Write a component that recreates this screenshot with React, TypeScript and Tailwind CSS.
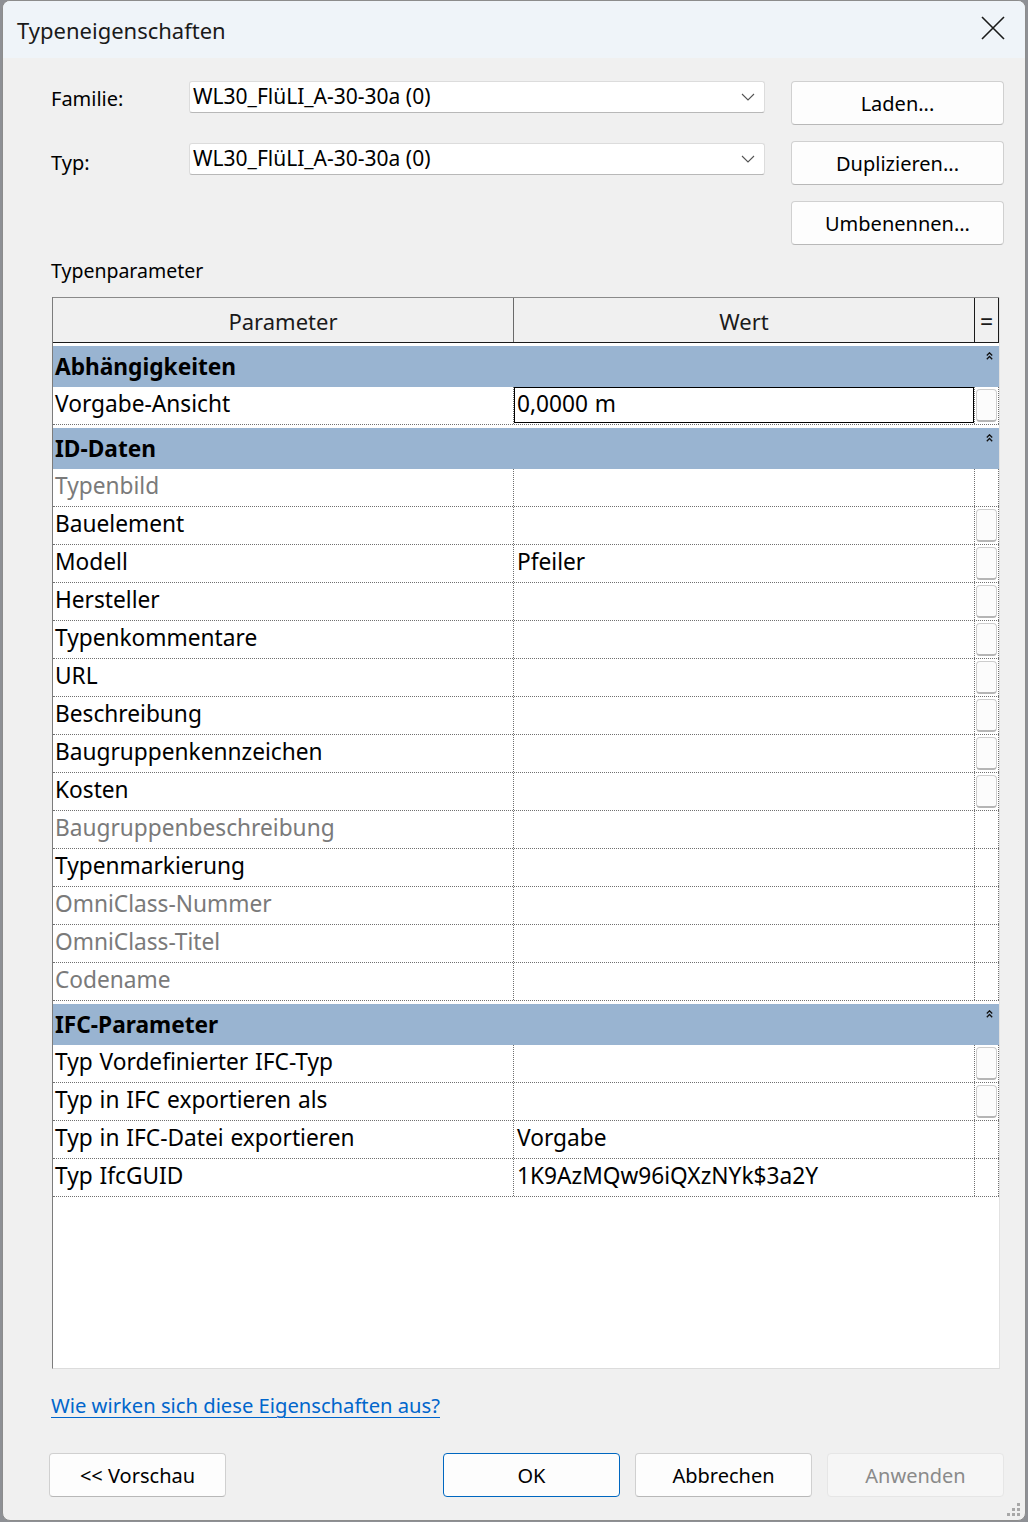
import React from 'react';

type RowDef = {
  name: string;
  value?: string;
  gray?: boolean;
  btn?: boolean;
  edit?: boolean;
};

type SectionDef = {
  title: string;
  rows: RowDef[];
};

const SECTIONS: SectionDef[] = [
  {
    title: 'Abhängigkeiten',
    rows: [{ name: 'Vorgabe-Ansicht', value: '0,0000 m', btn: true, edit: true }],
  },
  {
    title: 'ID-Daten',
    rows: [
      { name: 'Typenbild', gray: true },
      { name: 'Bauelement', btn: true },
      { name: 'Modell', value: 'Pfeiler', btn: true },
      { name: 'Hersteller', btn: true },
      { name: 'Typenkommentare', btn: true },
      { name: 'URL', btn: true },
      { name: 'Beschreibung', btn: true },
      { name: 'Baugruppenkennzeichen', btn: true },
      { name: 'Kosten', btn: true },
      { name: 'Baugruppenbeschreibung', gray: true },
      { name: 'Typenmarkierung' },
      { name: 'OmniClass-Nummer', gray: true },
      { name: 'OmniClass-Titel', gray: true },
      { name: 'Codename', gray: true },
    ],
  },
  {
    title: 'IFC-Parameter',
    rows: [
      { name: 'Typ Vordefinierter IFC-Typ', btn: true },
      { name: 'Typ in IFC exportieren als', btn: true },
      { name: 'Typ in IFC-Datei exportieren', value: 'Vorgabe' },
      { name: 'Typ IfcGUID', value: '1K9AzMQw96iQXzNYk$3a2Y' },
    ],
  },
];

function Chevron() {
  return (
    <svg width="14" height="8" viewBox="0 0 14 8" fill="none">
      <path d="M1 1 L7 7 L13 1" stroke="#555" strokeWidth="1.1" />
    </svg>
  );
}

function Combo({ value }: { value: string }) {
  return (
    <div className="w-[576px] h-[32px] bg-white border border-[#dcdcdc] border-b-[#b8b8b8] rounded-[3px] flex items-center justify-between pl-[3px] pr-[9px]">
      <span className="text-[21px] text-black leading-none pb-[1px]">{value}</span>
      <Chevron />
    </div>
  );
}

function DlgButton({ label, variant }: { label: string; variant?: 'primary' | 'disabled' }) {
  const cls =
    variant === 'primary'
      ? 'border-[#0067c0] bg-[#fdfdfd] text-black'
      : variant === 'disabled'
      ? 'border-[#e6e6e6] bg-[#f6f6f6] text-[#8a8a8a]'
      : 'border-[#d0d0d0] border-b-[#b8b8b8] bg-[#fdfdfd] text-black';
  return (
    <div className={`w-[177px] h-[44px] rounded-[4px] border flex items-center justify-center text-[20px] ${cls}`}>
      <span className="pt-[1px]">{label}</span>
    </div>
  );
}

function SideButton({ label }: { label: string }) {
  return (
    <div className="w-[213px] h-[44px] rounded-[4px] border border-[#d0d0d0] border-b-[#b8b8b8] bg-[#fdfdfd] flex items-center justify-center text-[20px] text-black">
      <span className="pt-[1px]">{label}</span>
    </div>
  );
}

function CollapseIcon() {
  return (
    <svg width="7" height="8" viewBox="0 0 7 8" fill="none">
      <path d="M0.8 3.5 L3.5 0.8 L6.2 3.5" stroke="#111" strokeWidth="1.3" />
      <path d="M0.8 7.2 L3.5 4.5 L6.2 7.2" stroke="#111" strokeWidth="1.3" />
    </svg>
  );
}

function Row({ row }: { row: RowDef }) {
  return (
    <div className="flex h-[38px] bg-white border-b border-dotted border-[#707070] text-[22.7px] [word-spacing:1px]">
      <div className={`w-[460px] pl-[2px] flex items-center leading-none pb-[2px] whitespace-nowrap ${row.gray ? 'text-[#7a7a7a]' : 'text-black'}`}>
        {row.name}
      </div>
      <div className="w-[461px] border-l border-dotted border-[#707070] flex">
        {row.edit ? (
          <div className="flex-1 border border-black flex items-center pl-[2px] leading-none pb-[2px] mb-[1px]">
            {row.value}
          </div>
        ) : (
          <div className="flex-1 flex items-center pl-[3px] leading-none pb-[2px] text-black">{row.value}</div>
        )}
      </div>
      <div className="w-[25px] border-l border-r border-dotted border-[#707070] flex items-stretch py-[2px] px-[1px]">
        {row.btn && (
          <div className="flex-1 rounded-[4px] border border-[#cdcdcd] border-b-2 border-b-[#b5b5b5] bg-[#fcfcfc]" />
        )}
      </div>
    </div>
  );
}

function Section({ section }: { section: SectionDef }) {
  return (
    <div className="pt-[3px] bg-white">
      <div className="h-[41px] bg-[#99b4d1] flex items-center pl-[2px] pr-[6px]">
        <span className="text-[22.7px] font-bold text-black leading-none pt-[1px]">{section.title}</span>
        <span className="ml-auto self-start mt-[6px]">
          <CollapseIcon />
        </span>
      </div>
      {section.rows.map((r) => (
        <Row key={r.name} row={r} />
      ))}
    </div>
  );
}

function Grip() {
  const dots: [number, number][] = [
    [10, 0],
    [5, 5],
    [10, 5],
    [0, 10],
    [5, 10],
    [10, 10],
  ];
  return (
    <svg width="14" height="14" viewBox="0 0 14 14">
      {dots.map(([x, y]) => (
        <rect key={`${x}-${y}`} x={x} y={y} width="3" height="3" fill="#a8a8a8" />
      ))}
    </svg>
  );
}

export default function App() {
  return (
    <div className="w-[1028px] h-[1522px] bg-[#8e9095] font-['Noto_Sans',sans-serif] overflow-hidden">
      <div className="relative ml-[2px] w-[1024px] h-[1521px] border border-[#8c8c8c] rounded-[8px] overflow-hidden bg-[#f0f0f0] flex flex-col">
        {/* Title bar */}
        <div className="h-[57px] bg-[#eff4f9] flex items-center justify-between pl-[14px] pr-[20px]">
          <span className="text-[22px] text-[#1a1a1a] pt-[2px]">Typeneigenschaften</span>
          <svg width="24" height="24" viewBox="0 0 24 24" fill="none" className="mb-[4px]">
            <path d="M1 1 L23 23 M23 1 L1 23" stroke="#1a1a1a" strokeWidth="1.6" />
          </svg>
        </div>

        {/* Body */}
        <div className="flex-1 flex flex-col pl-[46px] pr-[21px] pt-[23px]">
          <div className="flex justify-between">
            <div className="flex flex-col gap-[30px] ml-[2px]">
              <div className="flex items-start h-[32px]">
                <span className="w-[138px] text-[20px] text-black leading-[32px] pt-[2px]">Familie:</span>
                <Combo value="WL30_FlüLI_A-30-30a (0)" />
              </div>
              <div className="flex items-start h-[32px]">
                <span className="w-[138px] text-[20px] text-black leading-[32px] pt-[4px]">Typ:</span>
                <Combo value="WL30_FlüLI_A-30-30a (0)" />
              </div>
            </div>
            <div className="flex flex-col gap-[16px]">
              <SideButton label="Laden..." />
              <SideButton label="Duplizieren..." />
              <SideButton label="Umbenennen..." />
            </div>
          </div>

          <div className="ml-[2px] mt-[13px] h-[26px] text-[19.5px] text-black leading-[26px]">Typenparameter</div>

          {/* Table */}
          <div className="ml-[3px] mt-[13px] w-[948px] h-[1072px] flex flex-col border-l border-[#7c7c7c] border-b border-b-[#dcdcdc] border-r border-r-[#e2e2e2]">
            <div className="flex h-[46px] bg-[#f0f0f0] border-t border-[#8a8a8a] border-b border-b-[#1a1a1a]">
              <div className="w-[460px] flex items-center justify-center text-[22px] text-[#1a1a1a] pt-[2px]">Parameter</div>
              <div className="w-[461px] border-l border-[#6a6a6a] flex items-center justify-center text-[22px] text-[#1a1a1a] pt-[2px]">Wert</div>
              <div className="w-[25px] border-l border-r border-[#1a1a1a] flex items-center justify-center text-[23px] text-[#1a1a1a] pt-[2px]">=</div>
            </div>
            {SECTIONS.map((s) => (
              <Section key={s.title} section={s} />
            ))}
            <div className="flex-1 bg-white" />
          </div>

          <div className="ml-[2px] mt-[23px] h-[26px] leading-[26px]">
            <span className="text-[20.2px] text-[#0066cc] underline underline-offset-[4px] decoration-1">Wie wirken sich diese Eigenschaften aus?</span>
          </div>

          <div className="mt-[35px] flex items-center">
            <DlgButton label="<< Vorschau" />
            <div className="ml-auto flex gap-[15px]">
              <DlgButton label="OK" variant="primary" />
              <DlgButton label="Abbrechen" />
              <DlgButton label="Anwenden" variant="disabled" />
            </div>
          </div>
        </div>

        <div className="absolute right-[4px] bottom-[3px]">
          <Grip />
        </div>
      </div>
    </div>
  );
}
